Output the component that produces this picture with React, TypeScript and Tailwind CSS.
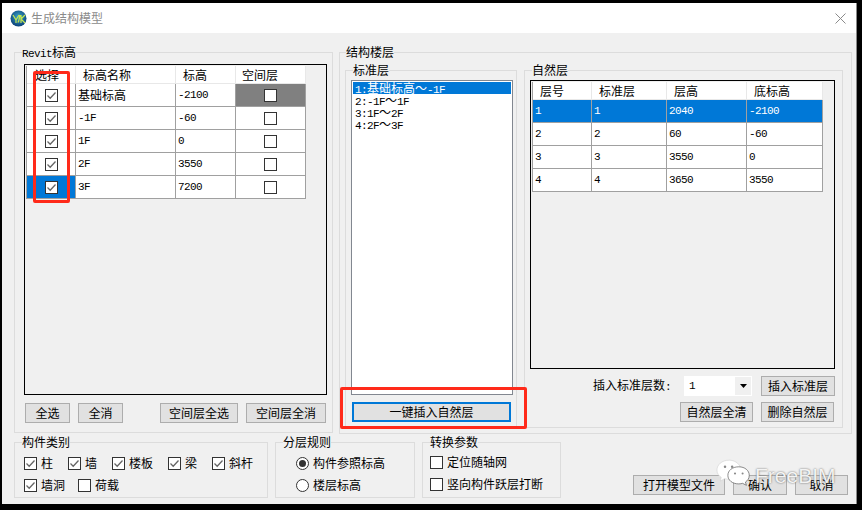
import React from "react";

const Mono = ({ children }: { children: React.ReactNode }) => (
  <span className="font-['Liberation_Mono',monospace] text-[11px] tracking-[-0.6px]">{children}</span>
);

const Check = ({ on = false }: { on?: boolean }) => (
  <span className="w-[13px] h-[13px] shrink-0 border border-[#333333] bg-white flex items-center justify-center">
    {on && (
      <svg width="11" height="11" viewBox="0 0 11 11" fill="none">
        <path d="M1.5 5.5 L4.2 8.2 L9.5 2.5" stroke="#666666" strokeWidth="1.3" />
      </svg>
    )}
  </span>
);

const Radio = ({ on = false }: { on?: boolean }) => (
  <span className="w-[13px] h-[13px] shrink-0 rounded-full border border-[#333333] bg-white flex items-center justify-center">
    {on && <span className="w-[7px] h-[7px] rounded-full bg-[#333333]" />}
  </span>
);

const Btn = ({ w, children, blue = false }: { w: string; children: React.ReactNode; blue?: boolean }) => (
  <div
    className={`${w} h-[20px] shrink-0 bg-[#e1e1e1] flex items-center justify-center leading-none ${
      blue ? "border-2 border-[#0078d7]" : "border border-[#adadad]"
    }`}
  >
    {children}
  </div>
);

const Legend = ({ x, children }: { x: string; children: React.ReactNode }) => (
  <div className={`absolute -top-[8px] ${x} bg-[#f0f0f0] leading-[14px] h-[14px] whitespace-nowrap`}>{children}</div>
);

const leftRows = [
  ["基础标高", "-2100"],
  ["-1F", "-60"],
  ["1F", "0"],
  ["2F", "3550"],
  ["3F", "7200"],
];

const rightRows = [
  ["1", "1", "2040", "-2100"],
  ["2", "2", "60", "-60"],
  ["3", "3", "3550", "0"],
  ["4", "4", "3650", "3550"],
];

const Txt = ({ s }: { s: string }) => (/[\u4e00-\u9fff]/.test(s) ? <span>{s}</span> : <Mono>{s}</Mono>);

const LeftTable = () => (
  <div className="w-[280px] border-l border-[#a0a0a0] bg-white grid grid-cols-[49px_100px_60px_70px]">
    <div className="h-[18px] pl-[8px] leading-[18px] border-r border-b border-[#e8e8e8]">选择</div>
    <div className="h-[18px] pl-[7px] leading-[18px] border-r border-b border-[#e8e8e8]">标高名称</div>
    <div className="h-[18px] pl-[7px] leading-[18px] border-r border-b border-[#e8e8e8]">标高</div>
    <div className="h-[18px] pl-[6px] leading-[18px] border-r border-b border-[#e8e8e8]">空间层</div>
    {leftRows.map((r, i) => (
      <React.Fragment key={i}>
        <div
          className={`h-[23px] border-r border-b border-[#a0a0a0] flex items-center justify-center ${
            i === 4 ? "bg-[#0078d7]" : ""
          }`}
        >
          <Check on />
        </div>
        <div className="h-[23px] pl-[2px] border-r border-b border-[#a0a0a0] flex items-center">
          <Txt s={r[0]} />
        </div>
        <div className="h-[23px] pl-[2px] border-r border-b border-[#a0a0a0] flex items-center">
          <Txt s={r[1]} />
        </div>
        <div
          className={`h-[23px] border-r border-b border-[#a0a0a0] flex items-center justify-center ${
            i === 0 ? "bg-[#808080]" : ""
          }`}
        >
          <Check />
        </div>
      </React.Fragment>
    ))}
  </div>
);

const RightTable = () => (
  <div className="w-[291px] border-l border-[#a0a0a0] bg-white grid grid-cols-[59px_75px_80px_76px]">
    {["层号", "标准层", "层高", "底标高"].map((h) => (
      <div key={h} className="h-[18px] pl-[7px] leading-[18px] border-r border-b border-[#e8e8e8]">
        {h}
      </div>
    ))}
    {rightRows.map((r, i) =>
      r.map((c, j) => (
        <div
          key={`${i}-${j}`}
          className={`h-[23px] pl-[2px] border-r border-b border-[#a0a0a0] flex items-center ${
            i === 0 ? "bg-[#0078d7] text-white" : ""
          }`}
        >
          <Mono>{c}</Mono>
        </div>
      ))
    )}
  </div>
);

const Label = ({ children, className = "" }: { children: React.ReactNode; className?: string }) => (
  <span className={`leading-[14px] whitespace-nowrap -translate-y-px ${className}`}>{children}</span>
);

export default function App() {
  return (
    <div className="relative w-[862px] h-[510px] bg-black pt-[3px] pl-[2px] pr-[5px] pb-[6px] text-[12px] text-black font-['Noto_Sans_CJK_SC','Liberation_Sans',sans-serif] overflow-hidden">
      <div className="h-full flex flex-col bg-[#f0f0f0] border-r border-[#8a8a8a]">
        {/* title bar */}
        <div className="h-[30px] shrink-0 bg-white flex items-center pl-[8px] pr-[10px]">
          <svg width="17" height="17" viewBox="0 0 17 17">
            <defs>
              <radialGradient id="yjk" cx="50%" cy="40%" r="60%">
                <stop offset="0%" stopColor="#3aa6c9" />
                <stop offset="100%" stopColor="#0b3f78" />
              </radialGradient>
            </defs>
            <circle cx="8.5" cy="8.5" r="8" fill="url(#yjk)" />
            <path d="M3 5 L6 10 L6 13 M9 5 L6 10 M10 5 L8.5 12 L7.5 12 M11 5 L11 13 M15 5 L11 9 L15 13" stroke="#c6e84f" strokeWidth="1.2" fill="none" />
          </svg>
          <span className="ml-[4px] text-[#8b8b8b] leading-none">生成结构模型</span>
          <svg className="ml-auto" width="11" height="11" viewBox="0 0 11 11">
            <path d="M0.5 0.5 L10.5 10.5 M10.5 0.5 L0.5 10.5" stroke="#8a8a8a" strokeWidth="1" />
          </svg>
        </div>

        {/* upper groups */}
        <div className="flex mt-[19px] ml-[12px]">
          <div className="relative w-[319px] h-[381px] border border-[#dcdcdc] pl-[9px] pt-[11px]">
            <Legend x="left-[7px]">
              <span className="font-['Liberation_Mono',monospace] text-[11px] tracking-[-0.6px]">Revit</span>标高
            </Legend>
            <div className="w-[303px] h-[331px] border border-black p-px">
              <LeftTable />
            </div>
            <div className="flex mt-[8px] ml-px">
              <Btn w="w-[45px]">全选</Btn>
              <Btn w="w-[45px] ml-[8px]">全消</Btn>
              <Btn w="w-[78px] ml-[37px]">空间层全选</Btn>
              <Btn w="w-[80px] ml-[8px]">空间层全消</Btn>
            </div>
          </div>

          <div className="relative ml-[6px] w-[513px] h-[382px] border border-[#dcdcdc] pl-[5px] pt-[17px] flex items-start gap-[7px]">
            <Legend x="left-[6px]">结构楼层</Legend>

            <div className="relative w-[172px] h-[358px] border border-[#dcdcdc] pl-[5px] pt-[9px]">
              <Legend x="left-[7px]">标准层</Legend>
              <div className="w-[162px] h-[315px] border border-[#828790] bg-white p-px">
                <div className="h-[12px] bg-[#0078d7] text-white leading-[12px] pl-[2px] whitespace-nowrap">
                  <Mono>1:</Mono>基础标高～<Mono>-1F</Mono>
                </div>
                <div className="h-[12px] leading-[12px] pl-[2px] whitespace-nowrap">
                  <Mono>2:-1F</Mono>～<Mono>1F</Mono>
                </div>
                <div className="h-[12px] leading-[12px] pl-[2px] whitespace-nowrap">
                  <Mono>3:1F</Mono>～<Mono>2F</Mono>
                </div>
                <div className="h-[12px] leading-[12px] pl-[2px] whitespace-nowrap">
                  <Mono>4:2F</Mono>～<Mono>3F</Mono>
                </div>
              </div>
              <div className="mt-[7px] ml-px">
                <Btn w="w-[159px]" blue>
                  一键插入自然层
                </Btn>
              </div>
            </div>

            <div className="relative w-[319px] h-[358px] border border-[#dcdcdc] pl-[5px] pt-[9px]">
              <Legend x="left-[7px]">自然层</Legend>
              <div className="w-[305px] h-[289px] border border-black p-px">
                <RightTable />
              </div>
              <div className="w-[305px] mt-[7px] flex items-center justify-end">
                <span className="mr-[13px] whitespace-nowrap">
                  插入标准层数<Mono>:</Mono>
                </span>
                <div className="w-[68px] h-[20px] mr-[9px] bg-white border border-white flex items-center pl-[4px]">
                  <Mono>1</Mono>
                  <div className="ml-auto w-[16px] h-full bg-[#f0f0f0] flex items-center justify-center">
                    <svg width="7" height="4" viewBox="0 0 7 4">
                      <path d="M0 0 H7 L3.5 4 Z" fill="#000000" />
                    </svg>
                  </div>
                </div>
                <Btn w="w-[74px]">插入标准层</Btn>
              </div>
              <div className="w-[305px] mt-[6px] flex justify-end gap-[8px] pr-px">
                <Btn w="w-[73px]">自然层全清</Btn>
                <Btn w="w-[73px]">删除自然层</Btn>
              </div>
            </div>
          </div>
        </div>

        {/* lower groups */}
        <div className="flex mt-[8px] ml-[12px] items-start">
          <div className="relative w-[254px] h-[56px] border border-[#dcdcdc]">
            <Legend x="left-[7px]">构件类别</Legend>
            <div className="flex items-center mt-[14px] ml-[9px] h-[13px]">
              <Check on />
              <Label className="ml-[4px]">柱</Label>
              <span className="w-[15px]" />
              <Check on />
              <Label className="ml-[4px]">墙</Label>
              <span className="w-[15px]" />
              <Check on />
              <Label className="ml-[4px]">楼板</Label>
              <span className="w-[15px]" />
              <Check on />
              <Label className="ml-[4px]">梁</Label>
              <span className="w-[15px]" />
              <Check on />
              <Label className="ml-[4px]">斜杆</Label>
            </div>
            <div className="flex items-center mt-[9px] ml-[9px] h-[13px]">
              <Check on />
              <Label className="ml-[4px]">墙洞</Label>
              <span className="w-[13px]" />
              <Check />
              <Label className="ml-[4px]">荷载</Label>
            </div>
          </div>

          <div className="relative ml-[7px] w-[140px] h-[56px] border border-[#dcdcdc] pl-[20px]">
            <Legend x="left-[7px]">分层规则</Legend>
            <div className="flex items-center mt-[14px] h-[13px]">
              <Radio on />
              <Label className="ml-[4px]">构件参照标高</Label>
            </div>
            <div className="flex items-center mt-[9px] h-[13px]">
              <Radio />
              <Label className="ml-[4px]">楼层标高</Label>
            </div>
          </div>

          <div className="relative ml-[7px] w-[139px] h-[56px] border border-[#dcdcdc] pl-[7px]">
            <Legend x="left-[7px]">转换参数</Legend>
            <div className="flex items-center mt-[13px] h-[13px]">
              <Check />
              <Label className="ml-[4px]">定位随轴网</Label>
            </div>
            <div className="flex items-center mt-[9px] h-[13px]">
              <Check />
              <Label className="ml-[4px]">竖向构件跃层打断</Label>
            </div>
          </div>

          <div className="flex mt-[33px] ml-[72px] gap-[8px]">
            <Btn w="w-[92px]">打开模型文件</Btn>
            <Btn w="w-[54px]">确认</Btn>
            <Btn w="w-[53px]">取消</Btn>
          </div>
        </div>
      </div>

      {/* red annotations */}
      <div className="absolute left-[33px] top-[71px] w-[37px] h-[132px] border-[3px] border-[#ff2a1a] rounded-[2px]" />
      <div className="absolute left-[340px] top-[387px] w-[187px] h-[42px] border-[3px] border-[#ff2a1a] rounded-[2px]" />

      {/* watermark */}
      <div className="absolute left-[716px] top-[459px] flex items-center">
        <svg width="38" height="27" viewBox="0 0 40 28">
          <path d="M14 1 C6 1 1 6 1 11.5 C1 15 3 17.5 5.5 19 L4.5 23 L9 20.5 C11 21 13 21 15 21 L26 9 C24 4 19 1 14 1 Z" fill="#ffffff" stroke="#cfcfcf" strokeWidth="0.6" />
          <path d="M24 8 C17 8 12.5 12 12.5 17 C12.5 22 17 26 24 26 C25.5 26 27 25.7 28 25.4 L32 27.5 L31 24 C33.5 22.5 35 20 35 17 C35 12 30.5 8 24 8 Z" fill="#ffffff" stroke="#555555" strokeWidth="0.7" />
          <circle cx="9.5" cy="8" r="1.3" fill="#888888" />
          <circle cx="17" cy="8" r="1.3" fill="#888888" />
          <circle cx="20" cy="15" r="1.1" fill="#888888" />
          <circle cx="28" cy="15" r="1.1" fill="#888888" />
        </svg>
        <span className="ml-[1px] mt-[6px] text-[21px] leading-none text-white/90 font-['Liberation_Sans',sans-serif] [text-shadow:0_0_2px_#555555]">
          FreeBIM
        </span>
      </div>
    </div>
  );
}
